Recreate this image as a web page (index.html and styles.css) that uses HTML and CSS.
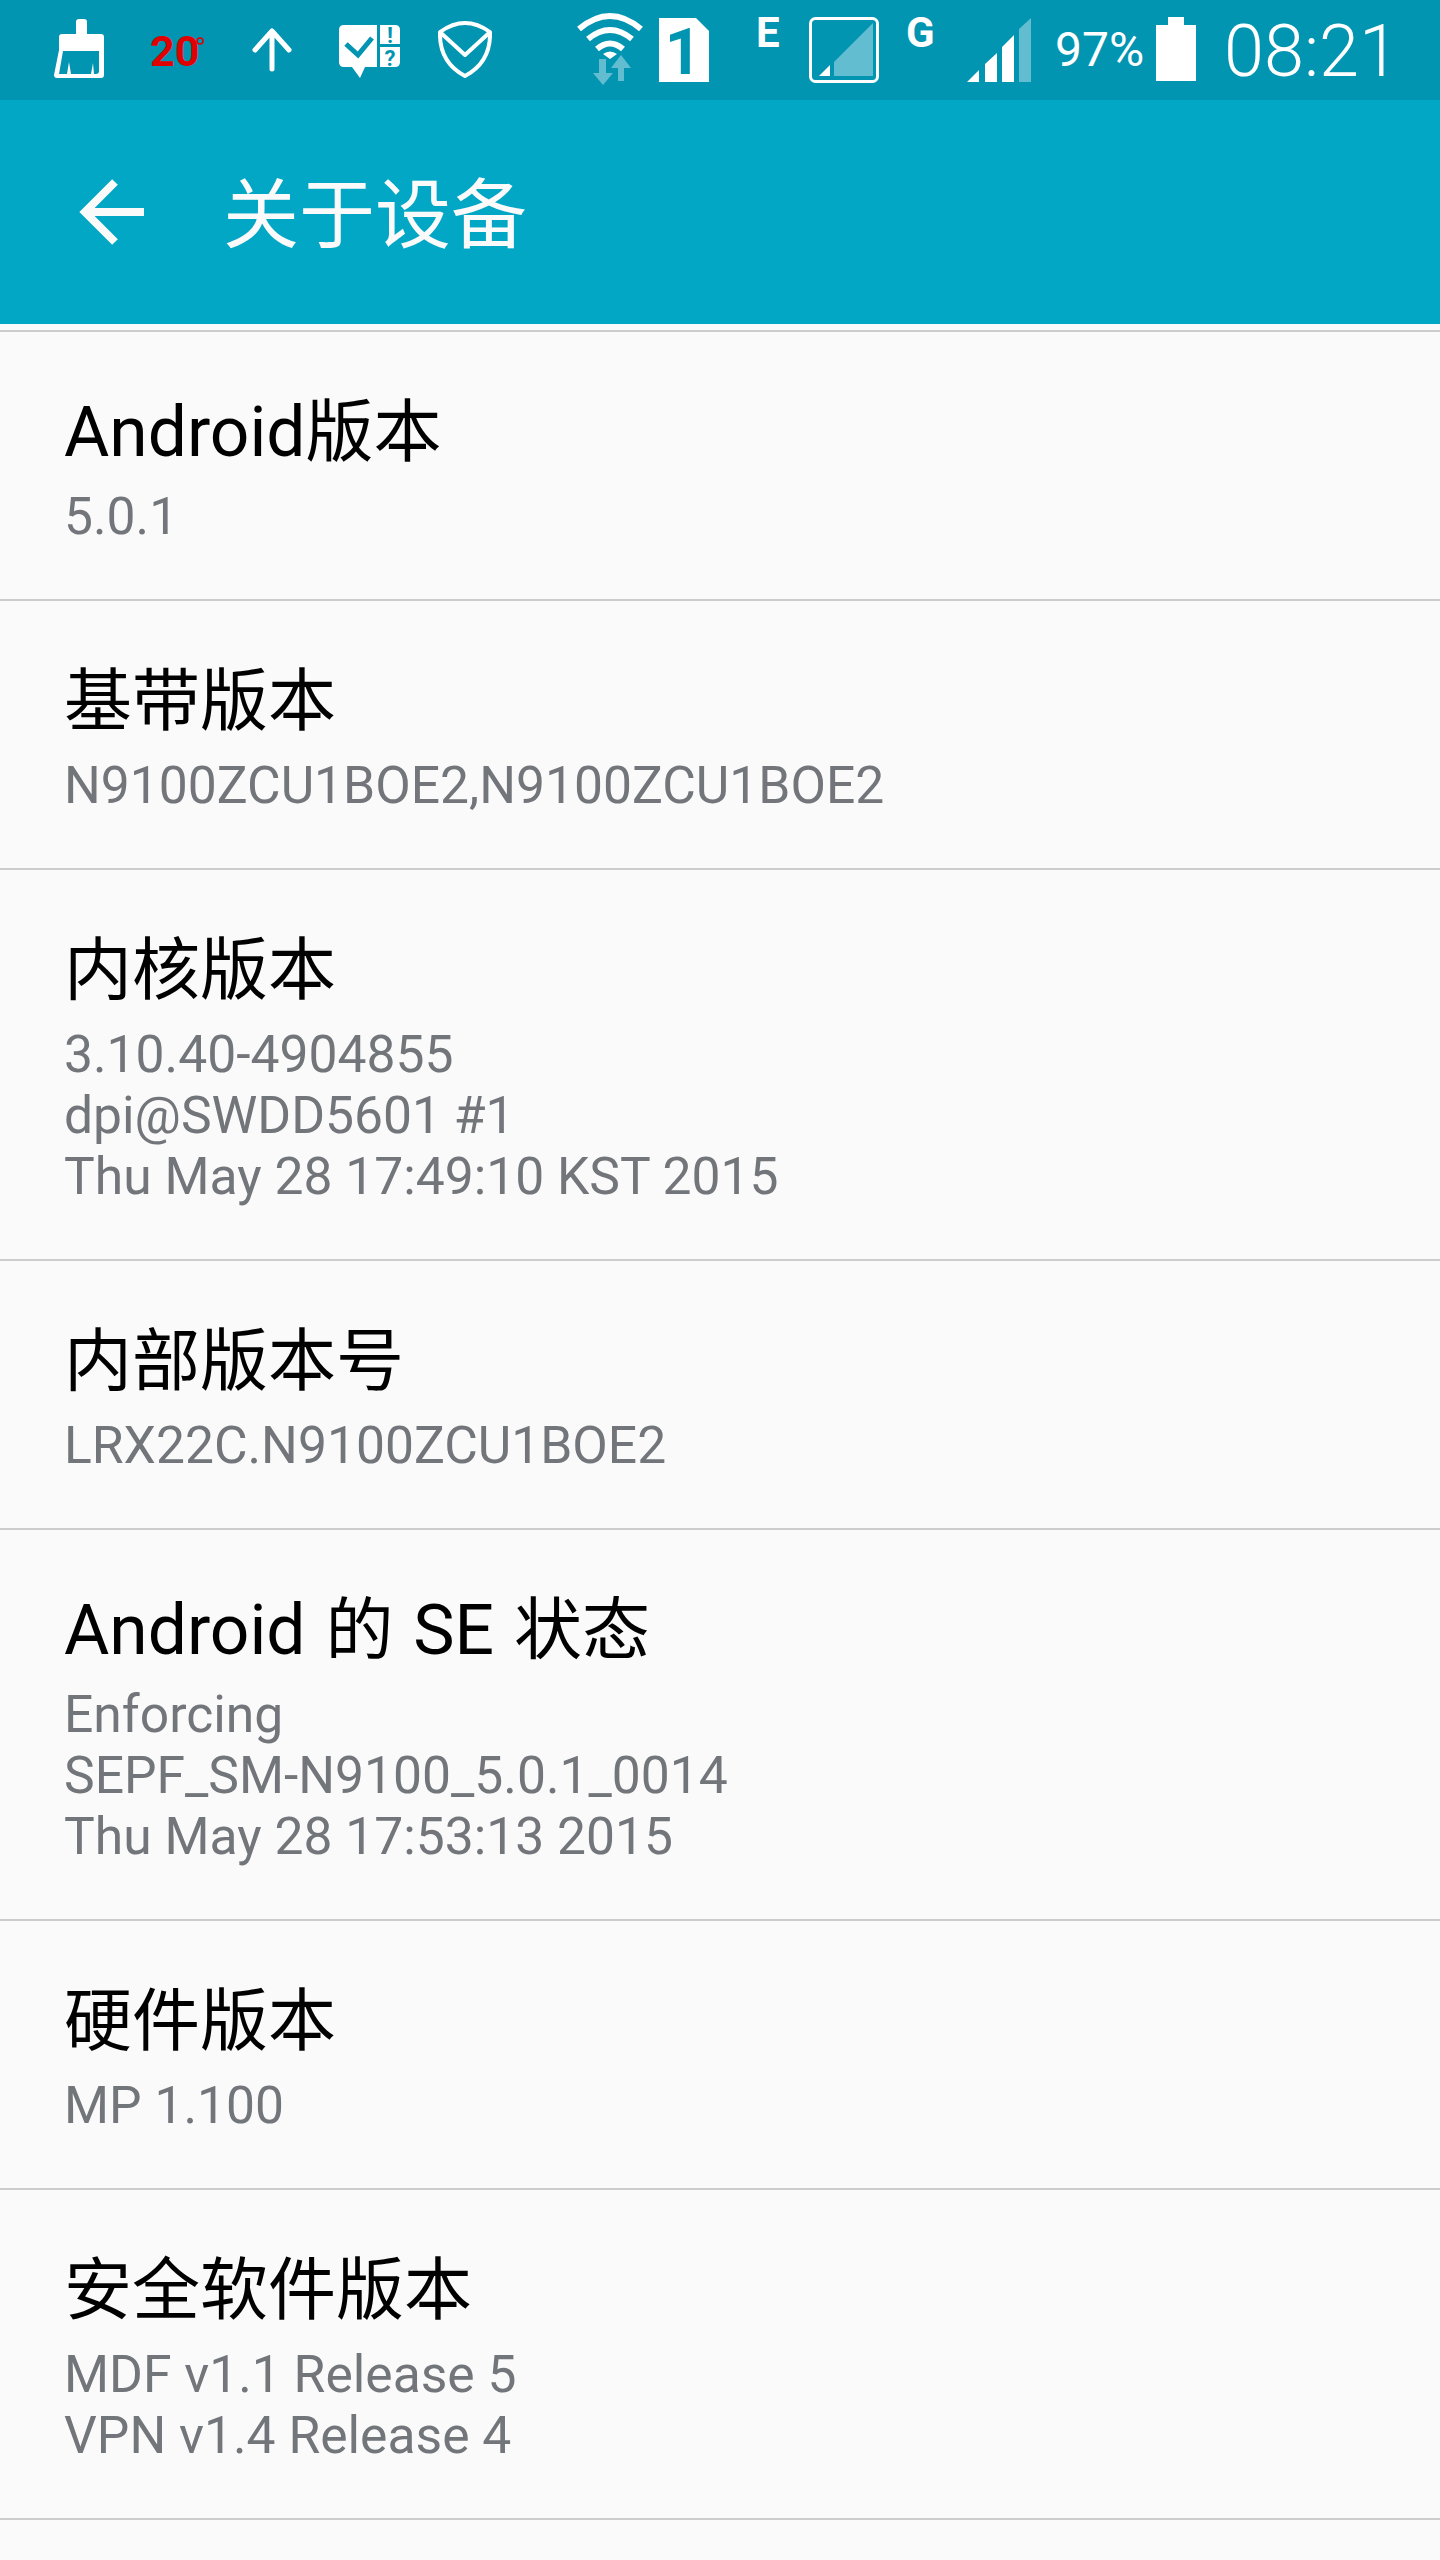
FILE: index.html
```html
<!DOCTYPE html>
<html lang="zh-CN">
<head>
    <meta charset="UTF-8" />
    <meta name="viewport" content="width=device-width, initial-scale=1.0" />
    <title>关于设备</title>
    <link rel="stylesheet" href="styles.css">
</head>
<body>
    <!-- Status bar: every icon svg is 100px tall so y values match the bar -->
    <div class="status_bar">
        <svg class="ic_clean" width="50" height="100" viewBox="0 0 50 100">
            <path fill="#fff" fill-rule="evenodd" d="M22 22q0-3 3-3h5q3 0 3 3V34h14q3 0 3 3V75q0 3-3 3H3q-3 0-3-3L5 50V37q0-3 3-3H22zM9 51H45V71q0 3-3 3L40 74 39 63 37 74H17L15 62 13 74H5z"/>
        </svg>
        <svg class="ic_temp" width="56" height="100" viewBox="0 0 56 100">
            <text x="0" y="66" class="temp_text">20</text>
            <circle cx="50" cy="41" r="3" fill="none" stroke="#e00000" stroke-width="1.6"/>
        </svg>
        <svg class="ic_up" width="40" height="100" viewBox="0 0 40 100">
            <path fill="none" stroke="#fff" stroke-width="5" stroke-linecap="round" stroke-linejoin="round" d="M20 69V32M3 50L20 31 37 50"/>
        </svg>
        <svg class="ic_bubble" width="62" height="100" viewBox="0 0 62 100">
            <path fill="#fff" d="M5 25H38V67H26L21 78 13 67H5q-5 0-5-5V30q0-5 5-5z"/>
            <path fill="none" stroke="#0295b1" stroke-width="5" d="M7 44L19 55 33 38"/>
            <path fill="#fff" d="M41 25H56q5 0 5 5V44H41zM41 47H61V62q0 5-5 5H41z"/>
            <text x="51" y="43" class="bubble_text">!</text>
            <text x="51" y="66" class="bubble_text">?</text>
        </svg>
        <svg class="ic_shield" width="54" height="100" viewBox="0 0 54 100">
            <path fill="none" stroke="#fff" stroke-width="4" stroke-linejoin="round" d="M2 32Q27 14 52 32 53 62 27 76 1 62 2 32zM3 33L27 55 51 33"/>
        </svg>
        <svg class="ic_wifi" width="66" height="100" viewBox="0 0 66 100">
            <path fill="none" stroke="#fff" stroke-width="6" d="M2 29Q33 3 64 29M11 39Q33 21 55 39M20 49Q33 38 46 49"/>
            <path fill="#fff" d="M26 54Q33 49 40 54L33 59z"/>
            <path fill="#62bdd1" d="M22 59H29V73H36L26 85 16 73H22zM34 68L44 55 54 68H47V81H41V68z"/>
        </svg>
        <svg class="ic_sim" width="50" height="100" viewBox="0 0 50 100">
            <path fill="#fff" d="M0 18H37L50 31V82H0z"/>
            <text x="24" y="74" class="sim_text">1</text>
        </svg>
        <span class="net_letter net_e">E</span>
        <svg class="ic_box" width="70" height="100" viewBox="0 0 70 100">
            <rect x="1.5" y="18.5" width="67" height="63" rx="5" fill="none" stroke="#fff" stroke-width="3"/>
            <path fill="#62bdd1" d="M64 23V76H25V62z"/>
            <path fill="#fff" d="M21 65V76H10z"/>
        </svg>
        <span class="net_letter net_g">G</span>
        <svg class="ic_bars" width="64" height="100" viewBox="0 0 64 100">
            <path fill="#fff" d="M0 82L12 70V82zM18 64L30 53V82H18zM35 47L47 35V82H35z"/>
            <path fill="#62bdd1" d="M52 29L64 18V82H52z"/>
        </svg>
        <span class="battery_pct">97%</span>
        <div class="battery">
            <div class="battery_cap"></div>
            <div class="battery_body"></div>
        </div>
        <span class="clock">08:21</span>
    </div>

    <div class="toolbar">
        <svg class="back_icon" width="66" height="70" viewBox="0 0 66 70">
            <path fill="none" stroke="#fafafa" stroke-width="8" d="M66 35H7M37 5L7 35 37 65" />
        </svg>
        <h1>关于设备</h1>
    </div>

    <div class="info_list">
        <div class="info_row">
            <h3><span class="latin">Android</span>版本</h3>
            <p>5.0.1</p>
        </div>
        <div class="info_row">
            <h3>基带版本</h3>
            <p>N9100ZCU1BOE2,N9100ZCU1BOE2</p>
        </div>
        <div class="info_row">
            <h3>内核版本</h3>
            <p>3.10.40-4904855</p>
            <p>dpi@SWDD5601 #1</p>
            <p>Thu May 28 17:49:10 KST 2015</p>
        </div>
        <div class="info_row">
            <h3>内部版本号</h3>
            <p>LRX22C.N9100ZCU1BOE2</p>
        </div>
        <div class="info_row">
            <h3><span class="latin">Android</span> 的 <span class="latin">SE</span> 状态</h3>
            <p>Enforcing</p>
            <p>SEPF_SM-N9100_5.0.1_0014</p>
            <p>Thu May 28 17:53:13 2015</p>
        </div>
        <div class="info_row">
            <h3>硬件版本</h3>
            <p>MP 1.100</p>
        </div>
        <div class="info_row">
            <h3>安全软件版本</h3>
            <p>MDF v1.1 Release 5</p>
            <p>VPN v1.4 Release 4</p>
        </div>
    </div>
</body>
</html>
```

FILE: styles.css
```css
* {
    margin: 0;
    padding: 0;
    box-sizing: border-box;
}

body {
    width: 100%;
    min-height: 100vh;
    background: #fafafa;
    font-family: "Roboto", "Noto Sans CJK SC", sans-serif;
}

/* Status bar */
.status_bar {
    height: 100px;
    display: flex;
    align-items: flex-start;
    padding-left: 54px;
    background: #0295b1;
    color: #fff;
}

.status_bar svg {
    flex: none;
}

.ic_temp { margin-left: 46px; }
.ic_up { margin-left: 46px; }
.ic_bubble { margin-left: 47px; }
.ic_shield { margin-left: 37px; }
.ic_wifi { margin-left: 85px; }
.ic_sim { margin-left: 16px; }
.ic_box { margin-left: 34px; }
.ic_bars { margin-left: 35px; }

.temp_text {
    font-family: "Roboto", sans-serif;
    font-size: 43px;
    font-weight: 700;
    fill: #e00000;
}

.bubble_text {
    font-family: "Roboto", sans-serif;
    font-size: 22px;
    font-weight: 700;
    text-anchor: middle;
    fill: #0295b1;
}

.sim_text {
    font-family: "Roboto", sans-serif;
    font-size: 64px;
    font-weight: 700;
    text-anchor: middle;
    fill: #0295b1;
}

.net_letter {
    font-size: 42px;
    font-weight: 700;
    line-height: 42px;
    margin-top: 12px;
}

.net_e { margin-left: 47px; width: 19px; }
.net_g { margin-left: 27px; width: 26px; }

.battery_pct {
    margin-left: 24px;
    font-size: 48px;
    line-height: 48px;
    margin-top: 26px;
}

.battery {
    margin-left: 12px;
    width: 40px;
    padding-top: 17px;
    display: flex;
    flex-direction: column;
    align-items: center;
}

.battery_cap {
    width: 16px;
    height: 8px;
    background: #fff;
}

.battery_body {
    width: 40px;
    height: 56px;
    background: #fff;
}

.clock {
    margin-left: 28px;
    font-size: 72px;
    font-weight: 300;
    line-height: 72px;
    margin-top: 16px;
}

/* Action bar */
.toolbar {
    height: 224px;
    display: flex;
    align-items: center;
    padding-left: 78px;
    background: #02a7c5;
}

.toolbar h1 {
    margin-left: 79px;
    margin-bottom: 6px;
    font-size: 76px;
    font-weight: 400;
    color: #fafafa;
}

/* Device info rows */
.info_list {
    margin-top: 6px;
    border-top: 2px solid #cccccc;
}

.info_row {
    padding: 61px 64px 52px;
    border-bottom: 2px solid #cccccc;
}

.info_row h3 {
    margin-bottom: 13px;
    font-size: 68px;
    font-weight: 400;
    line-height: 80px;
    word-spacing: 3px;
    color: #000;
}

.info_row h3 .latin {
    font-size: 69.5px;
}

.info_row p {
    font-size: 51.6px;
    line-height: 61px;
    color: #72767a;
}
```
